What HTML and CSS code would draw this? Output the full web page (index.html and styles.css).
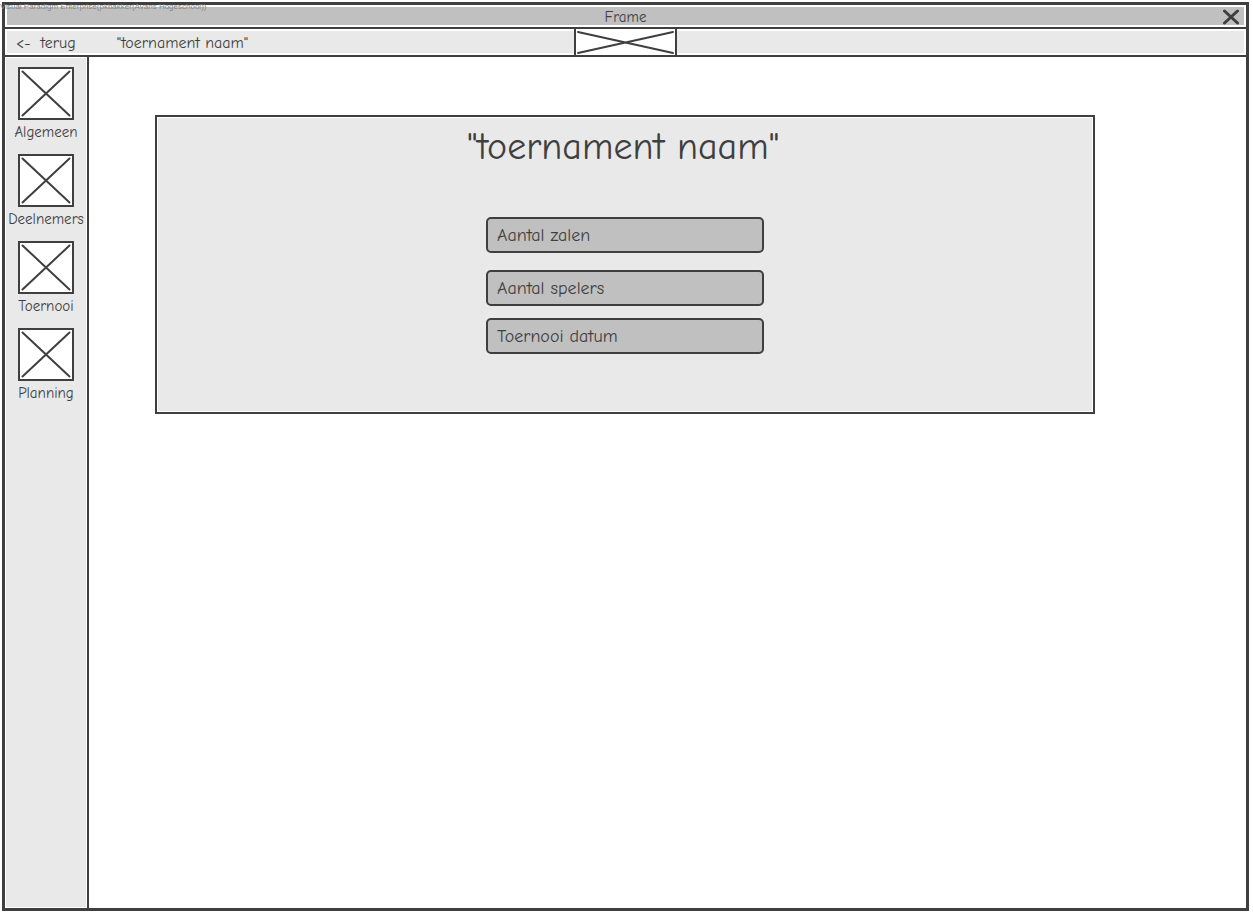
FILE: index.html
```html
<!DOCTYPE html>
<html lang="nl">
<head>
<meta charset="utf-8">
<title>Frame</title>
<link rel="stylesheet" href="styles.css">
</head>
<body>
<div class="watermark">Visual Paradigm Enterprise(pkbakker(Avans Hogeschool))</div>
<div class="frame">
  <header class="titlebar">
    <span class="titlebar-text">Frame</span>
    <button class="close" type="button" aria-label="Sluiten">
      <svg viewBox="0 0 18 16" width="18" height="16"><path d="M2.500 2 15.500 14M15.500 2 2.500 14"/></svg>
    </button>
  </header>
  <div class="toolbar">
    <div class="toolbar-left">
      <a class="back" href="#"><span>&lt;-</span><span>terug</span></a>
      <span>"toernament naam"</span>
    </div>
    <svg class="logo" viewBox="0 0 99 26" preserveAspectRatio="none"><path d="M2 3 97 24M97 3 2 24"/></svg>
    <div></div>
  </div>
  <div class="body">
    <nav class="sidebar">
      <a class="nav-item" href="#"><svg class="thumb" viewBox="0 0 52 49"><path d="M2.500 2.500 49.500 46.500M49.500 2.500 2.500 46.500"/></svg><span>Algemeen</span></a>
      <a class="nav-item" href="#"><svg class="thumb" viewBox="0 0 52 49"><path d="M2.500 2.500 49.500 46.500M49.500 2.500 2.500 46.500"/></svg><span>Deelnemers</span></a>
      <a class="nav-item" href="#"><svg class="thumb" viewBox="0 0 52 49"><path d="M2.500 2.500 49.500 46.500M49.500 2.500 2.500 46.500"/></svg><span>Toernooi</span></a>
      <a class="nav-item" href="#"><svg class="thumb" viewBox="0 0 52 49"><path d="M2.500 2.500 49.500 46.500M49.500 2.500 2.500 46.500"/></svg><span>Planning</span></a>
    </nav>
    <main class="main">
      <form class="panel">
        <h1 class="heading">"toernament naam"</h1>
        <input class="field field-halls" type="text" aria-label="Aantal zalen" value="Aantal zalen">
        <input class="field field-players" type="text" aria-label="Aantal spelers" value="Aantal spelers">
        <input class="field" type="text" aria-label="Toernooi datum" value="Toernooi datum">
      </form>
    </main>
  </div>
</div>
</body>
</html>
```
FILE: styles.css
```css
:root {
  --ink: #3f3f3f;
  --light: #e9e9e9;
  --mid: #c0c0c0;
  --hand: "Comic Sans MS", "Comic Neue", "Open Sans", sans-serif;
}

* { box-sizing: border-box; }

body {
  margin: 0;
  padding: 2px 4px 4px 2px;
  min-height: 100vh;
  display: flex;
  background: #fff;
  color: var(--ink);
  font: 15px/20px var(--hand);
}

a { color: inherit; text-decoration: none; }

svg { fill: none; stroke: var(--ink); stroke-width: 2; stroke-linecap: round; }

.watermark {
  position: absolute;
  top: 2px;
  left: 0;
  font: 8px/10px "Liberation Sans", Arial, sans-serif;
  color: #858585;
  white-space: nowrap;
}

.frame {
  flex: 1;
  display: flex;
  flex-direction: column;
  border: 3px solid var(--ink);
}

.titlebar {
  display: grid;
  grid-template-columns: 1fr auto 1fr;
  align-items: center;
  height: 24px;
  border-bottom: 2px solid var(--ink);
  padding: 2px;
  background: var(--mid) content-box;
}

.titlebar-text { grid-column: 2; }

.close {
  justify-self: end;
  display: flex;
  margin-right: 4px;
  padding: 0;
  border: 0;
  background: none;
}

.close svg { stroke-width: 3; }

.toolbar {
  display: grid;
  grid-template-columns: 1fr 103px 1fr;
  height: 28px;
  border-bottom: 2px solid var(--ink);
  background: linear-gradient(var(--light), var(--light)) center / calc(100% - 4px) 22px no-repeat;
}

.toolbar-left {
  display: flex;
  align-items: center;
  gap: 41px;
  padding: 2px 0 0 11px;
  font-size: 16px;
}

.back { display: flex; gap: 10px; }

.logo {
  width: 103px;
  height: 26px;
  border: solid var(--ink);
  border-width: 0 2px;
  background: #fff;
}

.body { flex: 1; display: flex; }

.sidebar {
  width: 84px;
  padding: 1px;
  border-right: 2px solid var(--ink);
  background: var(--light) content-box;
}

.nav-item {
  display: flex;
  flex-direction: column;
  align-items: center;
  gap: 2px;
  padding-top: 9px;
  height: 87px;
}

.thumb {
  width: 56px;
  height: 53px;
  border: 2px solid var(--ink);
  background: #fff;
}

.main { flex: 1; padding: 58px 151px 0 66px; }

.panel {
  display: flex;
  flex-direction: column;
  align-items: center;
  min-height: 299px;
  border: 2px solid var(--ink);
  padding: 1px;
  background: var(--light) content-box;
}

.heading {
  margin: 5px 4px 45px 0;
  font-size: 38px;
  line-height: 49px;
  font-weight: 400;
}

.field {
  width: 278px;
  height: 36px;
  border: 2px solid var(--ink);
  border-radius: 5px;
  padding: 0 9px;
  background: var(--mid);
  color: var(--ink);
  font: 18px/24px var(--hand);
}

.field-halls { margin-bottom: 17px; }
.field-players { margin-bottom: 12px; }
```
